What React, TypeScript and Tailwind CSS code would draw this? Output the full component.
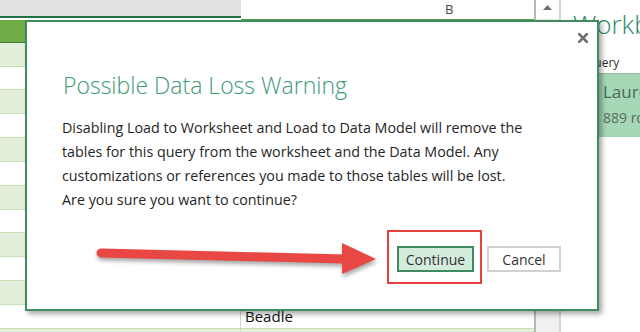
import React from "react";

const ui = { fontFamily: '"Open Sans", "Noto Sans", sans-serif' };

function SheetRow({ i, b }: { i: number; b?: string }) {
  const light = i % 2 === 0;
  return (
    <div
      className={`flex h-[23.85px] shrink-0 border-b border-[#c6e0b4] ${light ? "bg-[#e2efda]" : "bg-white"}`}
    >
      <div className="w-[241px] shrink-0 border-r border-[#d0d7cc]" />
      <div className="flex-1 flex items-center pl-[4px] text-[15px] text-[#111]" style={ui}>
        {b}
      </div>
    </div>
  );
}

export default function App() {
  const rows = Array.from({ length: 13 }, (_, i) => i);
  return (
    <div className="relative w-[640px] h-[332px] overflow-hidden bg-white flex" style={ui}>
      {/* Sheet */}
      <div className="w-[534px] shrink-0 flex flex-col">
        <div className="flex h-[20px] shrink-0">
          <div className="w-[241px] shrink-0 flex flex-col">
            <div className="h-[16px] bg-[#e1e1e1]" />
            <div className="h-[2px] bg-[#217346]" />
            <div className="h-[2px] bg-white" />
          </div>
          <div className="flex-1 flex flex-col">
            <div className="h-[19px] flex items-center pl-[204px] text-[13px] text-[#444]">B</div>
            <div className="h-[1px] bg-[#5aa34a]" />
          </div>
        </div>
        <div className="h-[22.7px] shrink-0 bg-[#70ad47] border-b border-[#3e7a2c]" />
        {rows.map((i) => (
          <SheetRow key={i} i={i} b={i === 11 ? "Beadle" : undefined} />
        ))}
      </div>

      {/* Scrollbar */}
      <div className="w-[27px] shrink-0 flex flex-col border-l-2 border-r-2 border-l-[#b8b8b8] border-r-[#d6d6d6] bg-[#f0f0f0]">
        <div className="h-[19px] bg-white flex items-start justify-center pt-[5px]">
          <svg width="9" height="5" viewBox="0 0 9 5">
            <polygon points="0,5 4.5,0 9,5" fill="#6f6f6f" />
          </svg>
        </div>
      </div>

      {/* Workbook Queries pane */}
      <div className="flex-1 flex flex-col pl-[12px] pt-[7px] bg-white">
        <div className="text-[26px] leading-[34px] font-light text-[#2a8a67] whitespace-nowrap">Workbook Queries</div>
        <div className="text-[12px] leading-[16px] text-[#333] whitespace-nowrap mt-[14px] pl-[4px]">1 query</div>
        <div className="mt-[2px] h-[64px] bg-[#a6d7b6] border-t border-[#9bb5a5] pl-[30px] flex flex-col">
          <div className="text-[17px] leading-[24px] text-[#4a6b5a] whitespace-nowrap mt-[6px]">Laurel</div>
          <div className="text-[14px] leading-[20px] text-[#5b6b63] whitespace-nowrap mt-[4px]">889 rows loaded.</div>
        </div>
      </div>

      {/* Dialog */}
      <div className="absolute left-[25px] top-[20px] w-[574px] h-[291px] bg-white border-2 border-[#3e8c60] shadow-[3px_3px_5px_rgba(0,0,0,0.35)] flex flex-col">
        <div className="flex justify-end pr-[9px] pt-[11px]">
          <svg width="10" height="10" viewBox="0 0 10 10">
            <path d="M1 1L9 9M9 1L1 9" stroke="#707070" strokeWidth="2.6" strokeLinecap="square" />
          </svg>
        </div>
        <div className="pl-[36px] mt-[26px] text-[23px] leading-[32px] font-light text-[#3c9a74] whitespace-nowrap">
          Possible Data Loss Warning
        </div>
        <div className="pl-[35px] mt-[15px] text-[14.3px] leading-[24px] text-[#262626] whitespace-nowrap">
          <div>Disabling Load to Worksheet and Load to Data Model will remove the</div>
          <div>tables for this query from the worksheet and the Data Model. Any</div>
          <div>customizations or references you made to those tables will be lost.</div>
          <div>Are you sure you want to continue?</div>
        </div>
        <div className="flex justify-end gap-[13px] pr-[36px] mt-[34px]">
          <button className="w-[77px] h-[26px] bg-[#d3ebdb] border-2 border-[#3f8a5e] text-[14px] text-[#333] flex items-center justify-center">
            Continue
          </button>
          <button className="w-[74px] h-[26px] bg-white border-2 border-[#d2d2d2] text-[14px] text-[#333] flex items-center justify-center">
            Cancel
          </button>
        </div>
      </div>

      {/* Annotation: red box */}
      <div className="absolute left-[387px] top-[230px] w-[95px] h-[54px] border-2 border-[#e8403c]" />

      {/* Annotation: arrow */}
      <svg
        className="absolute left-0 top-0 pointer-events-none drop-shadow-[1px_3px_2px_rgba(0,0,0,0.35)]"
        width="640"
        height="332"
        viewBox="0 0 640 332"
      >
        <line x1="101" y1="253" x2="346" y2="259" stroke="#e94743" strokeWidth="9" strokeLinecap="round" />
        <polygon points="342,243 376,259 342,274" fill="#e94743" />
      </svg>
    </div>
  );
}
